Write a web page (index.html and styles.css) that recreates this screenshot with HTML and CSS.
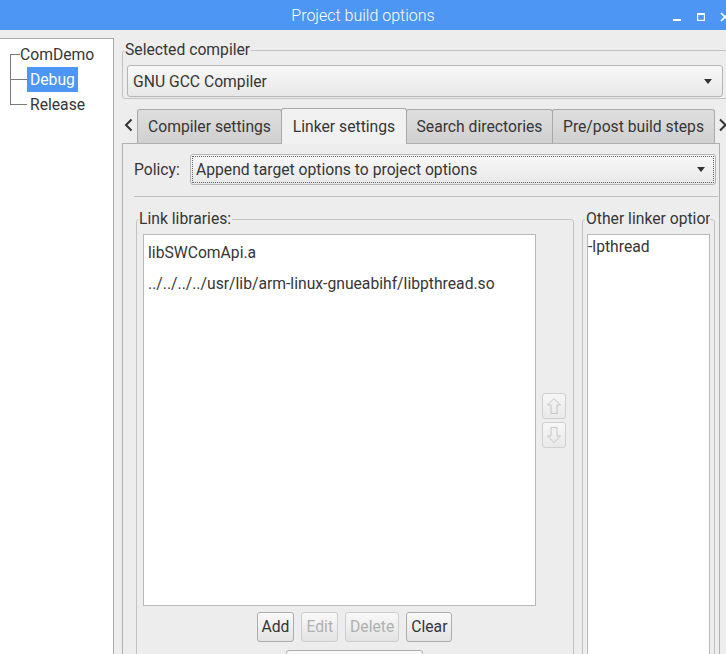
FILE: index.html
```html
<!DOCTYPE html>
<html>
<head>
<meta charset="utf-8">
<link rel="stylesheet" href="styles.css">
</head>
<body>
<div class="titlebar">
  <div></div>
  <div class="title">Project build options</div>
  <div class="controls">
    <svg width="12" height="12" viewBox="0 0 12 12"><rect x="2" y="8" width="8" height="2" fill="#fff"/></svg>
    <svg width="12" height="12" viewBox="0 0 12 12"><rect x="2.6" y="2.6" width="6.8" height="6.8" fill="none" stroke="#fff" stroke-width="1.2"/><rect x="2" y="2" width="8" height="2" fill="#fff"/></svg>
    <svg width="12" height="12" viewBox="0 0 12 12"><path d="M2 2L10 10M10 2L2 10" stroke="#fff" stroke-width="1.6"/></svg>
  </div>
</div>
<div class="main">
  <div class="tree">
    <div class="node root">ComDemo</div>
    <div class="children">
      <div class="node child"><span class="sel">Debug</span></div>
      <div class="node child"><span>Release</span></div>
    </div>
  </div>
  <div class="content">
    <fieldset class="group compiler">
      <legend>Selected compiler</legend>
      <div class="combo tall"><span>GNU GCC Compiler</span><span class="caret"></span></div>
    </fieldset>
    <div class="tabbar">
      <svg class="scroll" width="15" height="16" viewBox="0 0 15 16"><path d="M9.5 2.5L4 8L9.5 13.5" fill="none" stroke="#333" stroke-width="2"/></svg>
      <div class="tab t1">Compiler settings</div>
      <div class="tab t2 active">Linker settings</div>
      <div class="tab t3">Search directories</div>
      <div class="tab t4">Pre/post build steps</div>
      <svg class="scroll" width="15" height="16" viewBox="0 0 15 16"><path d="M4 2.5L9.5 8L4 13.5" fill="none" stroke="#333" stroke-width="2"/></svg>
    </div>
    <div class="pane">
      <div class="policy">
        <label class="policy-label">Policy:</label>
        <div class="combo focus"><span>Append target options to project options</span><span class="caret"></span></div>
      </div>
      <hr class="sep">
      <div class="groups">
        <fieldset class="group libs">
          <legend>Link libraries:</legend>
          <div class="libs-body">
            <div class="list">
              <div class="item">libSWComApi.a</div>
              <div class="item">../../../../usr/lib/arm-linux-gnueabihf/libpthread.so</div>
            </div>
            <div class="updown">
              <div class="arrowbtn"><svg width="22" height="24" viewBox="0 0 22 24"><path d="M11 4.5L17.5 11H14V19.5H8V11H4.5Z" fill="none" stroke="#c4c4c4" stroke-width="1"/></svg></div>
              <div class="arrowbtn"><svg width="22" height="24" viewBox="0 0 22 24"><path d="M11 19.5L17.5 13H14V4.5H8V13H4.5Z" fill="none" stroke="#c4c4c4" stroke-width="1"/></svg></div>
            </div>
          </div>
          <div class="btnrow">
            <div class="btn">Add</div>
            <div class="btn disabled">Edit</div>
            <div class="btn disabled">Delete</div>
            <div class="btn">Clear</div>
          </div>
          <div class="btnrow second">
            <div class="btn wide">Copy selected to...</div>
          </div>
        </fieldset>
        <fieldset class="group other">
          <legend>Other linker options:</legend>
          <div class="list otherlist">
            <div class="item small">-lpthread</div>
          </div>
        </fieldset>
      </div>
    </div>
  </div>
</div>
</body>
</html>
```
FILE: styles.css
```css
html, body {
  margin: 0;
  height: 100%;
  overflow: hidden;
}
body {
  background: #ededed;
  font-family: Roboto, "Liberation Sans", sans-serif;
  font-size: 15.7px;
  color: #363636;
}
.titlebar {
  height: 30px;
  background: #4d96f3;
  display: grid;
  grid-template-columns: 1fr auto 1fr;
  align-items: center;
  color: #fff;
}
.title {
  font-size: 16px;
  font-weight: 300;
  padding-top: 1px;
}
.controls {
  justify-self: end;
  display: flex;
  gap: 12px;
  margin-right: -5px;
  padding-top: 3px;
}
.main {
  display: flex;
  height: 624px;
}
.tree {
  width: 113px;
  flex: none;
  margin-top: 8px;
  padding-top: 3px;
  background: #fff;
  border-top: 1px solid #a8a8a8;
  border-right: 1px solid #a8a8a8;
}
.node {
  height: 25px;
  line-height: 25px;
  position: relative;
  padding-left: 20px;
}
.root::before {
  content: "";
  position: absolute;
  left: 10px;
  top: 12px;
  width: 10px;
  border-top: 1px solid #7a7a7a;
}
.children {
  position: relative;
}
.children::before {
  content: "";
  position: absolute;
  left: 10px;
  top: -13px;
  height: 50px;
  border-left: 1px solid #7a7a7a;
}
.child {
  padding-left: 27px;
}
.child::before {
  content: "";
  position: absolute;
  left: 10px;
  top: 12px;
  width: 17px;
  border-top: 1px solid #7a7a7a;
}
.child span {
  display: inline-block;
  padding: 0 3px;
}
.child .sel {
  background: #4d96f3;
  color: #fff;
}
.content {
  flex: 1;
  min-width: 0;
  padding: 11px 0 0 8px;
  overflow: hidden;
}
.group {
  border: 1px solid #c3c3c3;
  border-radius: 3px;
  margin: 0;
  min-width: 0;
}
.group legend {
  line-height: 18px;
  padding: 0 1px;
}
.compiler {
  padding: 6px 4px 1px 4px;
  margin-right: -2px;
}
.compiler legend {
  margin-left: -3px;
}
.combo {
  box-sizing: border-box;
  height: 31px;
  border: 1px solid #b5b5b5;
  border-radius: 3px;
  background: linear-gradient(#f8f8f8, #e8e8e8);
  display: flex;
  align-items: center;
  justify-content: space-between;
  padding: 0 10px 0 5px;
}
.combo.tall {
  height: 32px;
}
.combo.focus {
  flex: 1;
  outline: 1px dotted #666;
  outline-offset: -3px;
}
.caret {
  width: 0;
  height: 0;
  border-left: 4px solid transparent;
  border-right: 4px solid transparent;
  border-top: 5px solid #333;
}
.tabbar {
  display: flex;
  align-items: flex-end;
  height: 36px;
  margin-top: 8px;
  position: relative;
  z-index: 1;
}
.scroll {
  align-self: center;
  flex: none;
}
.tab {
  box-sizing: border-box;
  flex: none;
  height: 34px;
  line-height: 34px;
  text-align: center;
  border: 1px solid #a9a9a9;
  border-bottom: none;
  border-radius: 3px 3px 0 0;
  background: linear-gradient(#dedede, #d0d0d0);
  white-space: nowrap;
  margin-left: -1px;
}
.t1 { width: 145px; margin-left: 0; }
.t2 { width: 126px; }
.t3 { width: 147px; }
.t4 { width: 163px; }
.tab.active {
  height: 36px;
  line-height: 35px;
  margin-bottom: -1px;
  background: #f1f1f1;
}
.tabbar .scroll:last-child {
  margin-left: 1px;
}
.pane {
  border: 1px solid #b0b0b0;
  margin-right: 6px;
  padding: 10px 1px 0 11px;
  height: 600px;
}
.policy {
  display: flex;
  align-items: center;
  margin-right: 2px;
}
.policy-label {
  width: 56px;
  flex: none;
}
.sep {
  margin: 11px 0 0;
  border: 0;
  border-top: 1px solid #c0c0c0;
  height: 0;
}
.groups {
  display: grid;
  grid-template-columns: 438px 1fr;
  column-gap: 8px;
  margin: 13px 3px 0 2px;
}
.libs {
  padding: 6px 7px 0 6px;
}
.libs legend {
  margin-left: -5px;
}
.libs-body {
  display: flex;
  height: 372px;
}
.list {
  flex: 1;
  background: #fff;
  border: 1px solid #b8b8b8;
  padding-top: 2px;
}
.item {
  height: 31px;
  line-height: 31px;
  padding-left: 4px;
  white-space: nowrap;
}
.item.small {
  height: 24px;
  line-height: 24px;
  padding-left: 0;
}
.updown {
  width: 24px;
  margin-left: 6px;
  display: flex;
  flex-direction: column;
  justify-content: center;
  gap: 3px;
}
.arrowbtn {
  box-sizing: border-box;
  height: 26px;
  border: 1px solid #d0d0d0;
  border-radius: 3px;
  background: linear-gradient(#f6f6f6, #e9e9e9);
  display: flex;
  align-items: center;
  justify-content: center;
}
.btnrow {
  display: flex;
  justify-content: center;
  gap: 7px;
  margin-top: 6px;
}
.btnrow.second {
  margin-top: 8px;
}
.btn {
  box-sizing: border-box;
  height: 30px;
  line-height: 28px;
  padding: 0 4px;
  border: 1px solid #adadad;
  border-radius: 3px;
  background: linear-gradient(#f9f9f9, #e3e3e3);
}
.btn.disabled {
  color: #b0b0b0;
  border-color: #cdcdcd;
}
.btn.wide {
  width: 137px;
  text-align: center;
}
.other {
  padding: 6px 4px 0 4px;
  min-width: 0;
}
.other legend {
  margin-left: -2px;
  max-width: 123px;
  overflow: hidden;
  white-space: nowrap;
}
.otherlist {
  height: 500px;
  padding-top: 0;
}
```
